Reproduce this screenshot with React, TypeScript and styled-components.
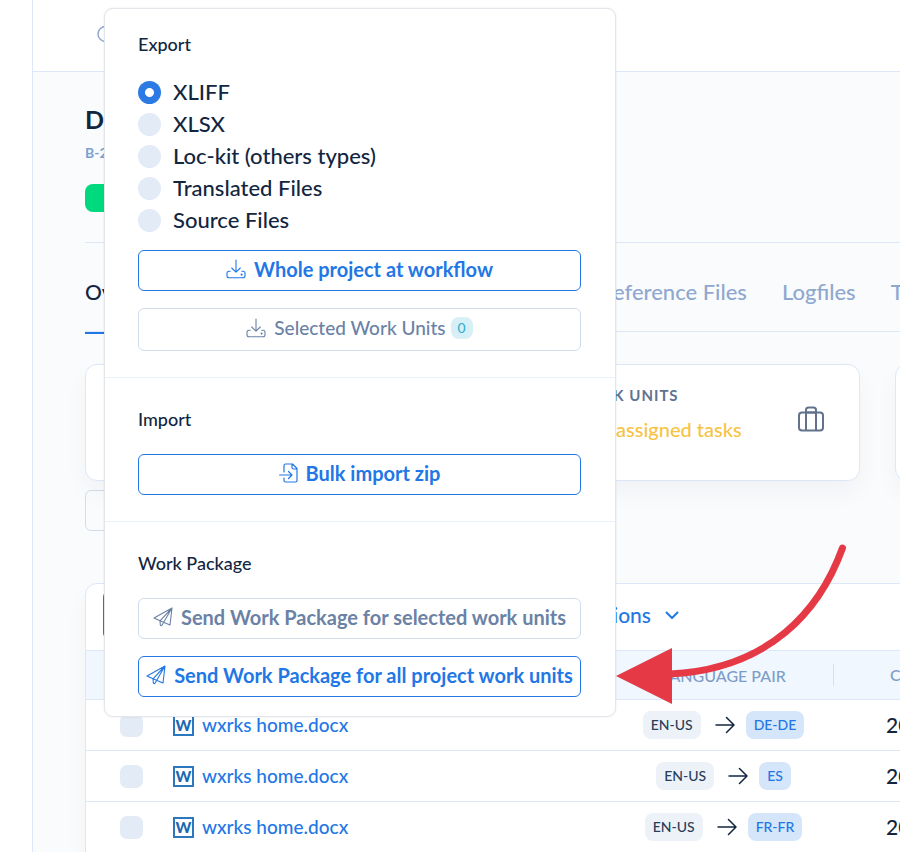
import React, { useState } from "react";
import styled, { createGlobalStyle } from "styled-components";

const font = '"Lato", "Inter", "Liberation Sans", sans-serif';

const c = {
  blue: "#2277e6",
  navy: "#12263f",
  muted: "#6b82a5",
  tab: "#8fa8cf",
  line: "#dce8f7",
  bg: "#f9fbfd",
};

const GlobalStyle = createGlobalStyle`
  * { box-sizing: border-box; }
  body { margin: 0; background: ${c.bg}; }
  button, input, table { font: inherit; color: inherit; }
`;

const Page = styled.div`
  display: flex;
  position: relative;
  min-height: 100vh;
  max-height: 100vh;
  overflow: hidden;
  font-family: ${font};
  font-weight: 500;
  color: ${c.navy};
  background: ${c.bg};
`;

const SideBar = styled.aside`
  flex: 0 0 33px;
  background: #fff;
  border-right: 1px solid ${c.line};
`;

const Main = styled.div`
  flex: 1;
  min-width: 0;
`;

const TopBar = styled.header`
  display: flex;
  align-items: center;
  height: 72px;
  padding: 0 64px 2px;
  background: #fff;
  border-bottom: 1px solid ${c.line};
`;

const Content = styled.main`
  min-width: 1232px;
  padding-left: 52px;
`;

const ProjectHeader = styled.div`
  height: 171px;
  padding-top: 32px;
  border-bottom: 1px solid ${c.line};
`;

const Title = styled.h1`
  margin: 0;
  font-size: 25px;
  line-height: 30px;
  font-weight: 700;
`;

const ProjectCode = styled.div`
  margin-top: 10px;
  font-size: 14px;
  line-height: 18px;
  font-weight: 700;
  color: #7ba1d2;
`;

const Status = styled.div`
  width: 90px;
  height: 28px;
  margin-top: 22px;
  border-radius: 8px;
  background: #00d97e;
`;

const Tabs = styled.nav`
  display: flex;
  gap: 35px;
  height: 89px;
  border-bottom: 1px solid ${c.line};
`;

const Tab = styled.a<{ $active?: boolean }>`
  height: 91px;
  padding-top: 35px;
  font-size: ${(p) => (p.$active ? 21 : 22)}px;
  line-height: 28px;
  text-decoration: none;
  color: ${(p) => (p.$active ? c.navy : c.tab)};
  border-bottom: ${(p) => (p.$active ? `2px solid ${c.blue}` : "0")};
`;

const MoreTabs = styled.div`
  display: flex;
  gap: 35px;
  margin-left: 390px;
`;

const Cards = styled.div`
  display: grid;
  grid-template-columns: repeat(3, 1fr);
  gap: 35px;
  margin-top: 32px;
`;

const Card = styled.section`
  display: flex;
  align-items: flex-start;
  justify-content: space-between;
  height: 117px;
  padding: 20px 34px 0 82px;
  background: #fff;
  border: 1px solid ${c.line};
  border-radius: 12px;
  box-shadow: 0 12px 24px rgba(18, 38, 63, 0.04);
`;

const CardLabel = styled.h2`
  margin: 0;
  font-size: 15px;
  line-height: 20px;
  font-weight: 700;
  letter-spacing: 1px;
  color: #5f7391;
`;

const CardValue = styled.div`
  margin-top: 12px;
  padding-left: 4px;
  font-size: 20px;
  line-height: 24px;
  color: #f6c343;
`;

const FilterBox = styled.button`
  display: block;
  width: 120px;
  height: 41px;
  margin-top: 9px;
  background: transparent;
  border: 1px solid #d2ddec;
  border-radius: 6px;
`;

const Panel = styled.section`
  margin-top: 52px;
  background: #fff;
  border: 1px solid ${c.line};
  border-radius: 12px 12px 0 0;
  box-shadow: 0 12px 24px rgba(18, 38, 63, 0.04);
`;

const ToolBar = styled.div`
  display: grid;
  grid-template-columns: 462px auto;
  justify-content: start;
  align-items: center;
  height: 66px;
  padding: 0 0 4px 17px;
`;

const PrimaryButton = styled.button`
  width: 120px;
  height: 48px;
  border: 0;
  border-radius: 6px;
  background: ${c.blue};
`;

const LinkButton = styled.button`
  display: flex;
  align-items: center;
  justify-content: flex-end;
  gap: 14px;
  width: 114px;
  padding: 0;
  border: 0;
  background: none;
  font-size: 21px;
  line-height: 24px;
  color: ${c.blue};
`;

const Table = styled.table`
  width: 100%;
  table-layout: fixed;
  border-collapse: separate;
  border-spacing: 0;
`;

const Th = styled.th<{ $width?: number; $divider?: boolean }>`
  width: ${(p) => (p.$width ? `${p.$width}px` : "auto")};
  height: 50px;
  padding: 0;
  font-size: 16px;
  font-weight: 500;
  color: #7d9dc8;
  background: #f1f7fe
    ${(p) => (p.$divider ? `linear-gradient(#d2e2f5, #d2e2f5) right center / 1px 22px no-repeat` : "")};
  border-top: 1px solid ${c.line};
  border-bottom: 1px solid ${c.line};
`;

const Td = styled.td<{ $center?: boolean }>`
  height: 51px;
  padding: 0;
  text-align: ${(p) => (p.$center ? "center" : "left")};
  border-bottom: 1px solid ${c.line};
`;

const Indent = styled.div<{ $size: number; $pad: number }>`
  padding-left: ${(p) => p.$pad}px;
  text-align: left;
  font-size: ${(p) => p.$size}px;
  line-height: 24px;
`;

const Check = styled.input`
  appearance: none;
  display: block;
  width: 23px;
  height: 23px;
  margin: 0 0 0 34px;
  border-radius: 7px;
  background: #e3ebf6;
  &:checked { background: ${c.blue}; }
`;

const FileCell = styled.div`
  display: flex;
  align-items: center;
  gap: 8px;
  padding-left: 21px;
`;

const WordIcon = styled.span`
  display: flex;
  align-items: center;
  justify-content: center;
  width: 21px;
  height: 21px;
  border: 2px solid #2b78be;
  font-size: 15px;
  line-height: 16px;
  font-weight: 900;
  color: #1b69b3;
`;

const FileLink = styled.a`
  font-size: 19px;
  line-height: 24px;
  text-decoration: none;
  color: ${c.blue};
`;

const Pair = styled.div`
  display: flex;
  align-items: center;
  justify-content: center;
`;

const Lang = styled.span<{ $target?: boolean }>`
  padding: 0 8px;
  border-radius: 8px;
  font-size: 14px;
  line-height: 28px;
  color: ${(p) => (p.$target ? c.blue : "#283e59")};
  background: ${(p) => (p.$target ? "#d5e5fa" : "#edf2f9")};
`;

const ArrowRight = styled.svg`
  margin: 0 11px 0 14px;
`;

const Menu = styled.div`
  position: absolute;
  top: 8px;
  left: 104px;
  width: 512px;
  background: #fff;
  border: 1px solid #e3e6eb;
  border-radius: 9px;
  box-shadow: 0 0 2px rgba(18, 38, 63, 0.12);
`;

const MenuSection = styled.section<{ $first?: boolean; $last?: boolean }>`
  padding: ${(p) => (p.$first ? 23 : 29)}px 34px ${(p) => (p.$last ? 19 : 26)}px 33px;
  border-bottom: ${(p) => (p.$last ? "0" : "1px solid #e8f0f9")};
`;

const MenuTitle = styled.h3`
  margin: 0 0 23px;
  font-size: 18px;
  line-height: 24px;
  font-weight: 500;
`;

const Options = styled.div`
  display: grid;
  margin: -3px 0 14px;
`;

const Option = styled.label`
  display: flex;
  align-items: center;
  gap: 12px;
  height: 32px;
  font-size: 22px;
  line-height: 28px;
`;

const Radio = styled.input`
  appearance: none;
  width: 23px;
  height: 23px;
  margin: 0;
  border-radius: 50%;
  background: #e3ebf6;
  &:checked { background: radial-gradient(circle, #fff 4px, #2c7be5 5px); }
`;

const MenuButton = styled.button<{ $muted?: boolean; $light?: boolean }>`
  display: flex;
  align-items: center;
  justify-content: center;
  gap: 8px;
  width: 100%;
  height: ${(p) => (p.$light ? 43 : 41)}px;
  padding: 0 0 3px;
  border: 1px solid ${(p) => (p.$muted ? "#d2ddec" : c.blue)};
  border-radius: 6px;
  background: #fff;
  font-size: ${(p) => (p.$light ? 19 : 20)}px;
  line-height: 24px;
  font-weight: ${(p) => (p.$light ? 500 : 700)};
  color: ${(p) => (p.$muted ? c.muted : c.blue)};
  & + & { margin-top: 17px; }
`;

const Count = styled.span`
  margin-left: -3px;
  padding: 0 7px;
  border-radius: 8px;
  background: #d7eff6;
  color: #39afd1;
  font-size: 14px;
  line-height: 22px;
`;

const Pointer = styled.svg`
  position: absolute;
  top: 540px;
  left: 612px;
  pointer-events: none;
`;

const DownloadIcon = () => (
  <svg width="20" height="20" viewBox="0 0 20 20" fill="none" stroke="currentColor" strokeWidth="1.1" strokeLinecap="round" strokeLinejoin="round" aria-hidden="true">
    <path d="M10 1v12M5.7 9l4.3 4.200L14.300 9M4.200 12.300H3a2 2 0 0 0-2 2v2.500a2 2 0 0 0 2 2h14a2 2 0 0 0 2-2v-2.500a2 2 0 0 0-2-2h-1.200" />
    <circle cx="15.600" cy="15.600" r=".5" fill="currentColor" />
  </svg>
);

const ImportIcon = () => (
  <svg width="19" height="20" viewBox="0 0 19 20" fill="none" stroke="currentColor" strokeWidth="1.200" strokeLinecap="round" strokeLinejoin="round" aria-hidden="true">
    <path d="M5 9V2.500A1.500 1.500 0 0 1 6.500 1h7L18 5.500v12a1.500 1.500 0 0 1-1.500 1.500h-10A1.500 1.500 0 0 1 5 17.500V15M13 1v3.500A1.500 1.500 0 0 0 14.500 6H18M.6 12H13M9.500 8.500 13 12l-3.500 3.500" />
  </svg>
);

const PlaneIcon = () => (
  <svg width="20" height="20" viewBox="0 0 20 20" fill="none" stroke="currentColor" strokeWidth="1.100" strokeLinecap="round" strokeLinejoin="round" aria-hidden="true">
    <path d="M19 1 1 11l6 2.800L17 18zM19 1 7 13.800M19 1l-8.300 14.300M7 13.800l.3 4q.5 1.500 1.700.4l1.700-2.900" />
  </svg>
);

const SearchIcon = () => (
  <svg width="20" height="20" viewBox="0 0 20 20" fill="none" stroke="#8fa8cf" strokeWidth="1.500" strokeLinecap="round" aria-hidden="true">
    <circle cx="8.500" cy="9" r="7.500" />
    <path d="m14 15 5 4" />
  </svg>
);

const BriefcaseSvg = styled.svg`
  margin-top: 21px;
`;

const BriefcaseIcon = () => (
  <BriefcaseSvg width="28" height="26" viewBox="0 0 28 26" fill="none" stroke="#62718c" strokeWidth="2" strokeLinejoin="round" aria-hidden="true">
    <rect x="2" y="6.500" width="24" height="18" rx="3" />
    <path d="M9 24.500V4a2.500 2.500 0 0 1 2.500-2.500h5A2.500 2.500 0 0 1 19 4v20.500M9 6.500h10" />
  </BriefcaseSvg>
);

const formats = ["XLIFF", "XLSX", "Loc-kit (others types)", "Translated Files", "Source Files"];
const rows = ["DE-DE", "ES", "FR-FR"];

export default function App() {
  const [format, setFormat] = useState("XLIFF");
  return (
    <Page>
      <GlobalStyle />
      <SideBar />
      <Main>
        <TopBar><SearchIcon /></TopBar>
        <Content>
          <ProjectHeader>
            <Title>Demo</Title>
            <ProjectCode>B-2</ProjectCode>
            <Status />
          </ProjectHeader>
          <Tabs>
            <Tab href="#overview" $active>Overview</Tab>
            <MoreTabs>
              <Tab href="#reference">Reference Files</Tab>
              <Tab href="#logfiles">Logfiles</Tab>
              <Tab href="#tasks">Tasks</Tab>
            </MoreTabs>
          </Tabs>
          <Cards>
            <Card />
            <Card>
              <div>
                <CardLabel>WORK UNITS</CardLabel>
                <CardValue>3 unassigned tasks</CardValue>
              </div>
              <BriefcaseIcon />
            </Card>
            <Card />
          </Cards>
          <FilterBox aria-label="Filter" />
          <Panel>
            <ToolBar>
              <PrimaryButton aria-label="Add" />
              <LinkButton>
                Actions
                <svg width="14" height="9" viewBox="0 0 14 9" fill="none" stroke="currentColor" strokeWidth="2" strokeLinecap="round" strokeLinejoin="round" aria-hidden="true">
                  <path d="m1.500 1.500 5.500 5.500 5.500-5.500" />
                </svg>
              </LinkButton>
            </ToolBar>
            <Table>
              <thead>
                <tr>
                  <Th $width={66} />
                  <Th $width={461} />
                  <Th $width={221} $divider>LANGUAGE PAIR</Th>
                  <Th><Indent $size={16} $pad={56}>CREATED</Indent></Th>
                </tr>
              </thead>
              <tbody>
                {rows.map((lang) => (
                  <tr key={lang}>
                    <Td><Check type="checkbox" aria-label={`Select ${lang} work unit`} /></Td>
                    <Td>
                      <FileCell>
                        <WordIcon aria-hidden="true">W</WordIcon>
                        <FileLink href="#file">wxrks home.docx</FileLink>
                      </FileCell>
                    </Td>
                    <Td $center>
                      <Pair>
                        <Lang>EN-US</Lang>
                        <ArrowRight width="20" height="18" viewBox="0 0 20 18" fill="none" stroke={c.navy} strokeWidth="1.500" strokeLinecap="round" strokeLinejoin="round" aria-hidden="true">
                          <path d="M1 9h18M11.500 1.500 19 9l-7.500 7.500" />
                        </ArrowRight>
                        <Lang $target>{lang}</Lang>
                      </Pair>
                    </Td>
                    <Td><Indent $size={21} $pad={52}>2023</Indent></Td>
                  </tr>
                ))}
              </tbody>
            </Table>
          </Panel>
        </Content>
      </Main>
      <Menu>
        <MenuSection $first>
          <MenuTitle>Export</MenuTitle>
          <Options role="radiogroup" aria-label="Export">
            {formats.map((f) => (
              <Option key={f}>
                <Radio type="radio" name="format" checked={format === f} onChange={() => setFormat(f)} />
                {f}
              </Option>
            ))}
          </Options>
          <MenuButton><DownloadIcon />Whole project at workflow</MenuButton>
          <MenuButton $muted $light><DownloadIcon />Selected Work Units <Count>0</Count></MenuButton>
        </MenuSection>
        <MenuSection>
          <MenuTitle>Import</MenuTitle>
          <MenuButton><ImportIcon />Bulk import zip</MenuButton>
        </MenuSection>
        <MenuSection $last>
          <MenuTitle>Work Package</MenuTitle>
          <MenuButton $muted><PlaneIcon />Send Work Package for selected work units</MenuButton>
          <MenuButton><PlaneIcon />Send Work Package for all project work units</MenuButton>
        </MenuSection>
      </Menu>
      <Pointer width="240" height="170" viewBox="612 540 240 170" aria-hidden="true">
        <path d="M842.500 548C820 610 770 669 670 674" fill="none" stroke="#e63946" strokeWidth="7" strokeLinecap="round" />
        <path d="m616 676 56-28v56z" fill="#e63946" />
      </Pointer>
    </Page>
  );
}
